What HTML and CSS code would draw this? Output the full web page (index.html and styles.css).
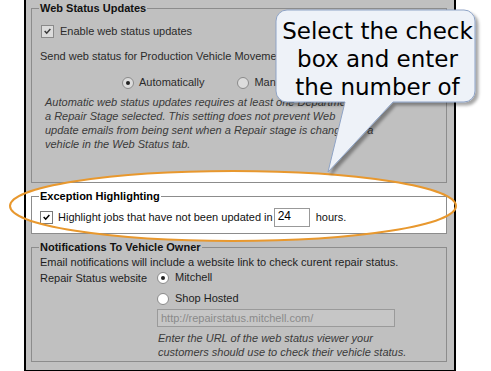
FILE: index.html
```html
<!DOCTYPE html>
<html>
<head>
<meta charset="utf-8">
<link rel="stylesheet" href="styles.css">
</head>
<body>
<div class="stage">
  <div class="panel">
    <fieldset class="group g1">
      <legend>Web Status Updates</legend>
      <div class="row r-enable">
        <span class="cb cb-dis"><svg viewBox="0 0 11 11"><path d="M2 5 L4.5 7.5 L9 2.5"/></svg></span>
        <span class="lbl">Enable web status updates</span>
      </div>
      <div class="line r-send">Send web status for Production Vehicle Movements</div>
      <div class="row r-radios">
        <span class="rd rd-dis on"></span><span class="lbl">Automatically</span>
        <span class="rd rd-dis rd-man"></span><span class="lbl">Manually</span>
      </div>
      <p class="note n1">Automatic web status updates requires at least one Department<br>a Repair Stage selected. This setting does not prevent Web<br>update emails from being sent when a Repair stage is changed in a<br>vehicle in the Web Status tab.</p>
    </fieldset>

    <fieldset class="group g2">
      <legend>Exception Highlighting</legend>
      <div class="row r-exc">
        <span class="cb cb-on"><svg viewBox="0 0 11 11"><path d="M2 5 L4.5 7.5 L9 2.5"/></svg></span>
        <span class="lbl">Highlight jobs that have not been updated in</span>
        <span class="num">24</span>
        <span class="lbl hours">hours.</span>
      </div>
    </fieldset>

    <fieldset class="group g3">
      <legend>Notifications To Vehicle Owner</legend>
      <div class="line r-email">Email notifications will include a website link to check curent repair status.</div>
      <div class="row r-site">
        <span class="site-lbl">Repair Status website</span>
        <span class="rd on"></span><span class="lbl">Mitchell</span>
      </div>
      <div class="row r-shop">
        <span class="rd"></span><span class="lbl">Shop Hosted</span>
      </div>
      <div class="url">http://repairstatus.mitchell.com/</div>
      <p class="note n3">Enter the URL of the web status viewer your<br>customers should use to check their vehicle status.</p>
    </fieldset>
  </div>

  <svg class="halo-fill" viewBox="0 0 491 371" width="491" height="371">
    <ellipse cx="233" cy="206" rx="223" ry="35" fill="#ffffff"/>
  </svg>
  <svg class="halo-stroke" viewBox="0 0 491 371" width="491" height="371">
    <ellipse cx="233" cy="206" rx="223" ry="35" fill="none" stroke="#e8982e" stroke-width="2"/>
  </svg>
  <svg class="bubble" viewBox="0 0 491 371" width="491" height="371">
    <defs>
      <filter id="sh" x="-10%" y="-10%" width="130%" height="130%">
        <feDropShadow dx="3" dy="3" stdDeviation="1.5" flood-color="#000" flood-opacity="0.35"/>
      </filter>
    </defs>
    <path d="M287,10 H464 A11,11 0 0 1 475,21 V91 A11,11 0 0 1 464,102 H393 L328,172 L345,102 H287 A11,11 0 0 1 276,91 V21 A11,11 0 0 1 287,10 Z" fill="#eef2f8" stroke="#8ea3c6" stroke-width="1" filter="url(#sh)"/>
  </svg>
  <div class="bubble-text">Select the check<br>box and enter<br>the number of</div>
</div>
</body>
</html>
```

FILE: styles.css
```css
html, body {
  margin: 0;
  padding: 0;
  background: #ffffff;
}
body {
  width: 491px;
  height: 371px;
  overflow: hidden;
  font-family: "Liberation Sans", Arial, sans-serif;
  font-size: 11px;
  color: #222;
}
.stage {
  position: relative;
  width: 491px;
  height: 371px;
}
.panel {
  position: relative;
  margin-left: 24px;
  width: 416px;
  border: 2px solid #000;
  border-top: 0;
  background: #c0c0c0;
  padding: 2px 7px 8px 5px;
  display: flex;
  flex-direction: column;
}
.panel::after {
  content: "";
  position: absolute;
  left: -2px;
  right: -2px;
  bottom: -2px;
  top: 0;
  border: 2px solid #000;
  border-top: 0;
  z-index: 3;
  pointer-events: none;
}
.group {
  position: relative;
  z-index: 2;
  margin: 0;
  padding: 0;
  border: 1px solid #8c8c8c;
  min-width: 0;
}
.group legend {
  margin-left: 7px;
  padding: 0 1px;
  font-weight: bold;
  font-size: 11px;
  line-height: 13px;
  height: 13px;
  color: #111;
}
.row {
  display: flex;
  align-items: center;
}
.line {
  line-height: 13px;
  height: 13px;
  white-space: nowrap;
}
.lbl {
  white-space: nowrap;
  line-height: 13px;
}

/* checkbox */
.cb {
  width: 11px;
  height: 11px;
  border: 1px solid #7a7a7a;
  background: #fff;
  display: inline-flex;
  align-items: center;
  justify-content: center;
  flex: none;
}
.cb svg {
  width: 9px;
  height: 9px;
}
.cb path {
  fill: none;
  stroke: #000;
  stroke-width: 1.8;
}
.cb-dis {
  background: #dcdcdc;
  border-color: #8a8a8a;
}
.cb-dis path {
  stroke: #3a3a3a;
}

/* radio */
.rd {
  width: 10px;
  height: 10px;
  border: 1px solid #8a8a8a;
  border-radius: 50%;
  background: #fff;
  flex: none;
  position: relative;
}
.rd.on::after {
  content: "";
  position: absolute;
  left: 3px;
  top: 3px;
  width: 4px;
  height: 4px;
  border-radius: 50%;
  background: #222;
}
.rd-dis {
  background: #dcdcdc;
}

/* group 1 */
.g1 {
  padding-bottom: 31px;
  color: #2b2b2b;
}
.r-enable {
  margin-top: 10px;
  margin-left: 9px;
  height: 13px;
}
.r-enable .lbl {
  margin-left: 6px;
}
.r-send {
  margin-top: 12px;
  padding-left: 8px;
}
.r-radios {
  margin-top: 13px;
  height: 13px;
  padding-left: 90px;
}
.r-radios .lbl {
  margin-left: 5px;
}
.rd-man {
  margin-left: 33px;
}
.note {
  margin: 0;
  font-style: italic;
  line-height: 14px;
  color: #3a3a3a;
  white-space: nowrap;
}
.n1 {
  margin-top: 6px;
  padding-left: 13px;
}

/* group 2 */
.g2 {
  margin-top: 7px;
  background: #fff;
  padding-bottom: 6px;
}
.g2 legend {
  color: #000;
}
.r-exc {
  margin-top: 5px;
  height: 19px;
  padding-left: 8px;
  color: #111;
}
.r-exc .lbl {
  margin-left: 5px;
}
.num {
  margin-left: 1px;
  width: 31px;
  height: 17px;
  border: 1px solid #999;
  background: #fff;
  padding-left: 3px;
  line-height: 15px;
  font-size: 12px;
  color: #000;
}
.r-exc .hours {
  margin-left: 6px;
}

/* group 3 */
.g3 {
  margin-top: 7px;
  padding-bottom: 2px;
  color: #1e1e1e;
}
.r-email {
  margin-top: 2px;
  padding-left: 8px;
}
.r-site {
  margin-top: 2px;
  height: 13px;
  padding-left: 8px;
}
.site-lbl {
  width: 117px;
  flex: none;
  white-space: nowrap;
}
.r-site .lbl,
.r-shop .lbl {
  margin-left: 6px;
}
.r-shop {
  margin-top: 8px;
  height: 13px;
  padding-left: 125px;
}
.url {
  margin-top: 4px;
  margin-left: 125px;
  width: 233px;
  height: 16px;
  border: 1px solid #9a9a9a;
  background: #c6c6c6;
  color: #8a8a8a;
  padding-left: 3px;
  line-height: 16px;
}
.n3 {
  margin-top: 4px;
  padding-left: 126px;
}

/* annotations */
.halo-fill,
.halo-stroke,
.bubble {
  position: absolute;
  left: 0;
  top: 0;
  pointer-events: none;
}
.halo-fill { z-index: 1; }
.halo-stroke { z-index: 4; }
.bubble { z-index: 5; }
.bubble-text {
  position: absolute;
  z-index: 6;
  left: 276px;
  top: 17px;
  width: 203px;
  text-align: center;
  font-family: "DejaVu Sans", Verdana, sans-serif;
  font-size: 23px;
  line-height: 28px;
  color: #000;
}
```
